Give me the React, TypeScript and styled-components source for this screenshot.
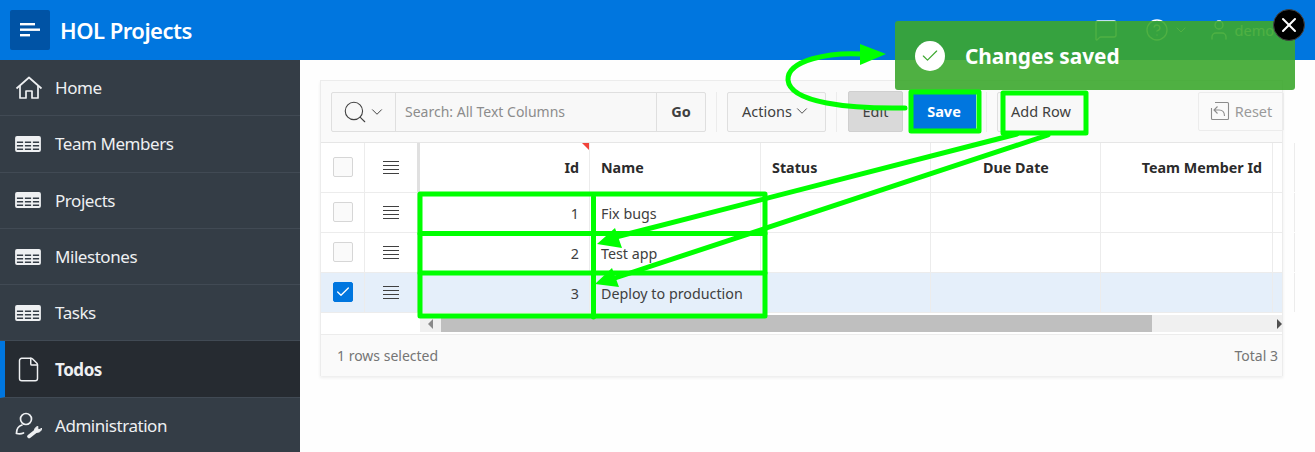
import * as React from 'react';
import styled, { createGlobalStyle } from 'styled-components';
import { Check, ChevronDown, CircleHelp, File, MessageSquare, Search, User, X } from 'lucide-react';

const NAV_ITEMS = ['Home', 'Team Members', 'Projects', 'Milestones', 'Tasks', 'Todos', 'Administration'];

type Align = 'start' | 'center' | 'end';

const COLUMNS: { title: string; width: number; align: Align }[] = [
	{ title: 'Id', width: 170, align: 'end' },
	{ title: 'Name', width: 171, align: 'start' },
	{ title: 'Status', width: 170, align: 'start' },
	{ title: 'Due Date', width: 170, align: 'center' },
	{ title: 'Team Member Id', width: 172, align: 'end' },
	{ title: '', width: 10, align: 'start' }
];

const ROWS = [
	{ id: 1, name: 'Fix bugs', selected: false },
	{ id: 2, name: 'Test app', selected: false },
	{ id: 3, name: 'Deploy to production', selected: true }
];

const TableIcon = () => (
	<svg width="26" height="16" viewBox="0 0 26 16" fill="none" stroke="#eef0f2" strokeWidth="1.8">
		<rect x="1" y="1" width="24" height="14" rx="1" />
		<path d="M1 4.500h24M1 8h24M1 11.500h24M9 4.500V15M17 4.500V15" />
		<path d="M1 2.600h24" strokeWidth="3" />
	</svg>
);

const HomeIcon = () => (
	<svg width="28" height="24" viewBox="0 0 28 24" fill="none" stroke="#eef0f2" strokeWidth="1.7" strokeLinejoin="round">
		<path d="M1.500 12.500 14 1.500l12.500 11" />
		<path d="M5 10v12h6v-7h6v7h6V10" />
	</svg>
);

const AdminIcon = () => (
	<svg width="28" height="27" viewBox="0 0 28 27" fill="none" stroke="#eef0f2" strokeWidth="1.7" strokeLinecap="round">
		<circle cx="11" cy="7" r="5.500" />
		<path d="M7 13c-3 1-5.500 4-5.500 8" />
		<path d="M1.500 21.500c2 .5 5 .5 7-.5" />
		<path d="M14 24.500 21 19" strokeWidth="3.600" />
		<path d="M20 20c-1.500-3 1-5.500 3-5.500l-.5 2.500 2.500.5 1.500-1.500c.5 3-3 5.500-6.500 4z" fill="#eef0f2" strokeWidth="1" />
	</svg>
);

const ResetIcon = () => (
	<svg width="20" height="20" viewBox="0 0 20 20" fill="none" stroke="#8c8c8c" strokeWidth="1.100">
		<path d="M5 1.500h12.500a1 1 0 0 1 1 1V17.500a1 1 0 0 1-1 1H2.500a1 1 0 0 1-1-1V7" />
		<path d="M14.500 15c0-3.500-2-6-5.500-6H4M7.500 5.500 4 9l3.500 3.500" />
	</svg>
);

const navIcon = (label: string) => {
	if (label === 'Home') return <HomeIcon />;
	if (label === 'Todos') return <File size={27} strokeWidth={1.3} color="#eef0f2" />;
	if (label === 'Administration') return <AdminIcon />;
	return <TableIcon />;
};

const Hamburger = () => (
	<svg width="20" height="14" viewBox="0 0 20 14" fill="#fff">
		<rect x="0" y="0" width="15" height="2.400" />
		<rect x="0" y="5.500" width="20" height="2.400" />
		<rect x="0" y="11" width="10" height="2.400" />
	</svg>
);

const RowHandle = () => (
	<svg width="16" height="14" viewBox="0 0 16 14" stroke="#404040" strokeWidth="1">
		<path d="M0 1.500h16M0 5.500h16M0 9.500h16M0 13.500h16" />
	</svg>
);

const Annotations = () => (
	<Overlay width="1315" height="452" viewBox="0 0 1315 452" fill="none" stroke="#00ff00" strokeWidth="5" strokeLinejoin="round" strokeLinecap="round">
		<rect x="911" y="92" width="68" height="39" />
		<rect x="1003" y="93" width="83" height="40" />
		<rect x="420" y="194" width="345" height="122" />
		<path d="M420 233.500h345M420 273h345M593.500 197v120" />
		<path d="M905 108C850 109 790 103 788 80 787 60 830 52 862 54" />
		<path d="M860 44 886 54 860 65Z" fill="#00ff00" stroke="none" />
		<path d="M1017 134 612 238M1048 135 612 279" />
		<path d="M597 244 615 228 622 248Z M595 284 612 268 619 287Z" fill="#00ff00" stroke="none" />
	</Overlay>
);

export default function App() {
	return (
		<Page>
			<GlobalStyle />
			<Header>
				<MenuButton>
					<Hamburger />
				</MenuButton>
				<Title>HOL Projects</Title>
				<HeaderTools>
					<MessageSquare size={24} strokeWidth={1.3} />
					<HelpGroup>
						<CircleHelp size={24} strokeWidth={1.3} />
						<ChevronDown size={16} strokeWidth={1.5} />
					</HelpGroup>
					<UserGroup>
						<User size={24} strokeWidth={1.3} />
						<span>demo</span>
					</UserGroup>
				</HeaderTools>
			</Header>
			<Body>
				<Sidebar>
					{NAV_ITEMS.map(label => (
						<NavItem key={label} $active={label === 'Todos'}>
							<NavIcon>{navIcon(label)}</NavIcon>
							{label}
						</NavItem>
					))}
				</Sidebar>
				<Main>
					<Region>
						<Toolbar>
							<SearchGroup>
								<SearchPicker>
									<Search size={26} strokeWidth={1} color="#404040" />
									<ChevronDown size={18} strokeWidth={1.3} color="#404040" />
								</SearchPicker>
								<SearchField>Search: All Text Columns</SearchField>
								<GoButton>Go</GoButton>
							</SearchGroup>
							<ToolDivider />
							<ToolButton $width={99}>
								Actions
								<ChevronDown size={18} strokeWidth={1.2} />
							</ToolButton>
							<ToolDivider />
							<EditButton>Edit</EditButton>
							<SaveButton>Save</SaveButton>
							<ToolDivider />
							<ToolButton $width={88}>Add Row</ToolButton>
							<Spacer />
							<ResetButton>
								<ResetIcon />
								Reset
							</ResetButton>
						</Toolbar>
						<HeadRow>
							<CheckCell>
								<CheckBox $checked={false} />
							</CheckCell>
							<HandleCell>
								<RowHandle />
							</HandleCell>
							<FreezeBar />
							{COLUMNS.map((col, i) => (
								<HeadCell key={i} $width={col.width} $align={col.align}>
									{col.title}
									{col.title === 'Id' && <SortMark />}
								</HeadCell>
							))}
						</HeadRow>
						{ROWS.map(row => (
							<DataRow key={row.id} $selected={row.selected}>
								<CheckCell>
									<CheckBox $checked={row.selected}>
										{row.selected && <Check size={16} strokeWidth={2} color="#fff" />}
									</CheckBox>
								</CheckCell>
								<HandleCell>
									<RowHandle />
								</HandleCell>
								<FreezeBar />
								{COLUMNS.map((col, i) => (
									<DataCell key={i} $width={col.width} $align={col.align}>
										{i === 0 ? row.id : i === 1 ? row.name : ''}
									</DataCell>
								))}
							</DataRow>
						))}
						<ScrollRow>
							<ScrollGutter />
							<ScrollTrack>
								<ScrollArrow $dir="left" />
								<ScrollThumb />
								<ScrollArrow $dir="right" />
							</ScrollTrack>
						</ScrollRow>
						<Footer>
							<span>1 rows selected</span>
							<span>Total 3</span>
						</Footer>
					</Region>
				</Main>
			</Body>
			<Toast>
				<ToastCheck>
					<Check size={20} strokeWidth={1.4} color="#3ca72e" />
				</ToastCheck>
				Changes saved
				<ToastClose>
					<X size={24} strokeWidth={2} color="#fff" />
				</ToastClose>
			</Toast>
			<Annotations />
		</Page>
	);
}

// css
const GlobalStyle = createGlobalStyle`
	html, body {
		margin: 0;
		padding: 0;
		background: #fefefe;
	}
	* {
		box-sizing: border-box;
	}
`;

const Page = styled.div`
	position: relative;
	width: 1315px;
	height: 452px;
	overflow: hidden;
	font-family: 'Noto Sans', 'Open Sans', sans-serif;
	color: #2b2b2b;
`;

const Header = styled.header`
	height: 60px;
	background: #0076df;
	display: flex;
	align-items: center;
	padding-left: 10px;
`;

const MenuButton = styled.div`
	width: 40px;
	height: 40px;
	border-radius: 2px;
	background: #0053a5;
	display: flex;
	align-items: center;
	justify-content: center;
`;

const Title = styled.div`
	margin-left: 10px;
	color: #fff;
	font-size: 22px;
	font-weight: 600;
	letter-spacing: -0.5px;
`;

const HeaderTools = styled.div`
	margin-left: auto;
	padding-right: 41px;
	display: flex;
	align-items: center;
	gap: 27px;
	color: #fff;
	font-size: 14.500px;
`;

const HelpGroup = styled.div`
	display: flex;
	align-items: center;
	gap: 4px;
`;

const UserGroup = styled.div`
	display: flex;
	align-items: center;
	gap: 4px;
	margin-left: -9px;
`;

const Body = styled.div`
	display: flex;
	height: 392px;
`;

const Sidebar = styled.nav`
	width: 300px;
	background: #343d46;
	flex: none;
`;

const NavItem = styled.div<{ $active: boolean }>`
	height: 56.300px;
	display: flex;
	align-items: center;
	padding-left: ${p => (p.$active ? 10 : 15)}px;
	border-left: ${p => (p.$active ? '5px solid #0076df' : 'none')};
	border-bottom: 1px solid #414a54;
	background: ${p => (p.$active ? '#262b31' : 'transparent')};
	color: #eef0f2;
	font-size: 17px;
	font-weight: ${p => (p.$active ? 700 : 400)};
	letter-spacing: -0.45px;
`;

const NavIcon = styled.span`
	width: 40px;
	display: flex;
	align-items: center;
`;

const Main = styled.main`
	flex: 1;
	padding: 20px 32px 0 20px;
`;

const Region = styled.section`
	width: 963px;
	height: 296px;
	border: 1px solid #ececec;
	background: #fff;
	box-shadow: 0 2px 3px rgba(0, 0, 0, 0.07);
`;

const Toolbar = styled.div`
	height: 62px;
	background: #fafafa;
	border-bottom: 1px solid #e6e6e6;
	display: flex;
	align-items: center;
	padding: 0 0 0 10px;
	font-size: 14.500px;
	color: #404040;
`;

const SearchGroup = styled.div`
	display: flex;
	width: 375px;
	height: 40px;
	border: 1px solid #dfdfdf;
	border-radius: 2px;
	background: #f8f8f8;
`;

const SearchPicker = styled.div`
	width: 64px;
	display: flex;
	align-items: center;
	justify-content: center;
	border-right: 1px solid #dfdfdf;
`;

const SearchField = styled.div`
	flex: 1;
	display: flex;
	align-items: center;
	padding: 0 0 0 9px;
	font-size: 14px;
	color: #8c8c8c;
`;

const GoButton = styled.div`
	width: 49px;
	display: flex;
	align-items: center;
	justify-content: center;
	padding-bottom: 2px;
	border-left: 1px solid #dfdfdf;
	font-weight: 700;
`;

const ToolDivider = styled.div`
	width: 1px;
	height: 40px;
	background: #ececec;
	margin: 0 10px;
`;

const ToolButton = styled.div<{ $width: number }>`
	width: ${p => p.$width}px;
	height: 40px;
	padding-bottom: 2px;
	border: 1px solid #dfdfdf;
	border-radius: 2px;
	background: #f8f8f8;
	display: flex;
	align-items: center;
	justify-content: center;
	gap: 1px;
`;

const EditButton = styled.div`
	width: 55px;
	height: 41px;
	margin-left: 1px;
	padding-bottom: 2px;
	border: 1px solid #cfcfcf;
	border-radius: 2px;
	background: #d9d9d9;
	display: flex;
	align-items: center;
	justify-content: center;
`;

const SaveButton = styled.div`
	width: 66px;
	height: 40px;
	margin-left: 7px;
	padding: 0 0 2px 2px;
	background: #0076df;
	color: #fff;
	font-weight: 700;
	display: flex;
	align-items: center;
	justify-content: center;
`;

const Spacer = styled.div`
	flex: 1;
`;

const ResetButton = styled.div`
	width: 86px;
	height: 39px;
	padding-bottom: 2px;
	border: 1px solid #ececec;
	border-radius: 2px;
	color: #9a9a9a;
	display: flex;
	align-items: center;
	justify-content: center;
	gap: 5px;
	margin-right: -2px;
`;

const HeadRow = styled.div`
	display: flex;
	height: 50px;
	border-bottom: 1px solid #ececec;
`;

const DataRow = styled.div<{ $selected: boolean }>`
	display: flex;
	height: 40px;
	border-bottom: 1px solid #ececec;
	background: ${p => (p.$selected ? '#e5effa' : '#fff')};
`;

const CheckCell = styled.div`
	width: 44px;
	flex: none;
	display: flex;
	align-items: center;
	justify-content: center;
	padding-bottom: 1px;
	border-right: 1px solid #ececec;
`;

const HandleCell = styled.div`
	width: 52px;
	flex: none;
	display: flex;
	align-items: center;
	justify-content: center;
	padding-bottom: 2px;
`;

const FreezeBar = styled.div`
	width: 3px;
	flex: none;
	background: #e0e0e0;
`;

const CheckBox = styled.div<{ $checked: boolean }>`
	width: 20px;
	height: 20px;
	border-radius: 2px;
	border: 1px solid ${p => (p.$checked ? '#0076df' : '#d6d6d6')};
	background: ${p => (p.$checked ? '#0076df' : '#fafafa')};
	display: flex;
	align-items: center;
	justify-content: center;
`;

const HeadCell = styled.div<{ $width: number; $align: Align }>`
	position: relative;
	width: ${p => p.$width}px;
	flex: none;
	display: flex;
	align-items: center;
	justify-content: ${p => p.$align};
	padding: 0 10px 0 11px;
	border-right: 1px solid #ececec;
	font-size: 14.300px;
	font-weight: 700;
`;

const DataCell = styled.div<{ $width: number; $align: Align }>`
	width: ${p => p.$width}px;
	flex: none;
	display: flex;
	align-items: center;
	justify-content: ${p => p.$align};
	padding: 2px 10px 0 11px;
	border-right: 1px solid #ececec;
	font-size: 14.300px;
	color: #404040;
`;

const SortMark = styled.span`
	position: absolute;
	top: 0;
	right: 0;
	border-top: 7px solid #f0433a;
	border-left: 7px solid transparent;
`;

const ScrollRow = styled.div`
	display: flex;
	height: 22px;
	border-bottom: 1px solid #ececec;
`;

const ScrollGutter = styled.div`
	width: 99px;
	flex: none;
`;

const ScrollTrack = styled.div`
	flex: 1;
	height: 17px;
	margin-top: 2px;
	background: #f0f0f0;
	display: flex;
	align-items: center;
`;

const ScrollThumb = styled.div`
	width: 711px;
	height: 100%;
	background: #bfbfbf;
	margin-left: 8px;
`;

const ScrollArrow = styled.span<{ $dir: 'left' | 'right' }>`
	border-top: 5px solid transparent;
	border-bottom: 5px solid transparent;
	${p =>
		p.$dir === 'left'
			? 'border-right: 5px solid #8a8a8a; margin-left: 8px;'
			: 'border-left: 5px solid #505050; margin-left: auto;'}
`;

const Footer = styled.div`
	height: 41px;
	background: #fafafa;
	display: flex;
	align-items: center;
	justify-content: space-between;
	padding: 0 4px 0 16px;
	font-size: 14px;
	color: #757575;
`;

const Toast = styled.div`
	position: absolute;
	left: 895px;
	top: 21px;
	width: 400px;
	height: 69px;
	border-radius: 3px;
	background: rgba(60, 167, 46, 0.9);
	display: flex;
	align-items: center;
	padding-left: 20px;
	color: #fff;
	font-size: 20.800px;
	font-weight: 700;
	gap: 20px;
`;

const ToastCheck = styled.div`
	width: 30px;
	height: 30px;
	border-radius: 50%;
	background: #fff;
	display: flex;
	align-items: center;
	justify-content: center;
`;

const ToastClose = styled.div`
	position: absolute;
	right: -10px;
	top: -12px;
	width: 32px;
	height: 32px;
	border-radius: 50%;
	background: #000;
	border: 1px solid #444;
	display: flex;
	align-items: center;
	justify-content: center;
`;

const Overlay = styled.svg`
	position: absolute;
	left: 0;
	top: 0;
	pointer-events: none;
`;
